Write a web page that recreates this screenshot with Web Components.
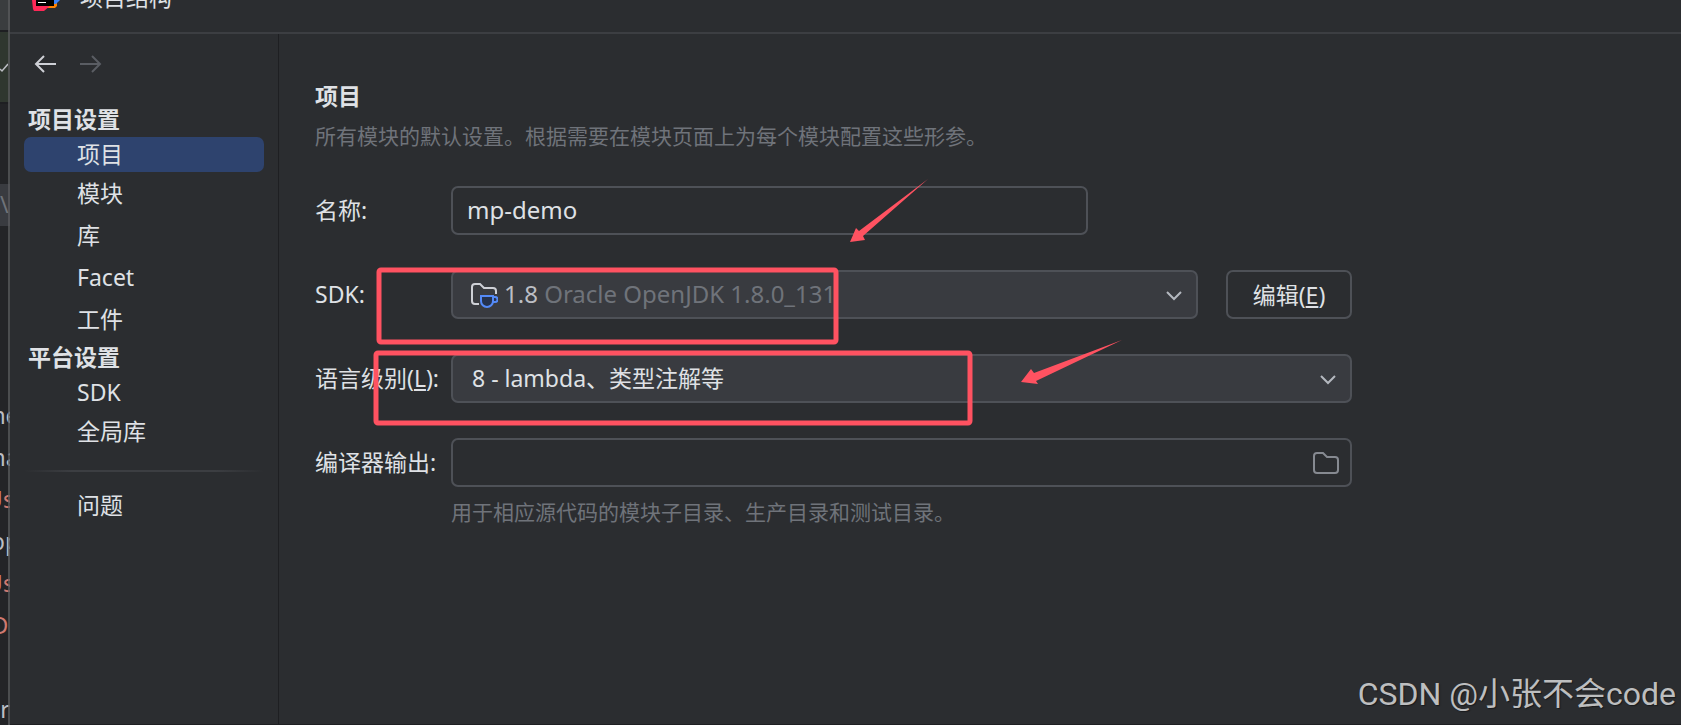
<!DOCTYPE html>
<html lang="zh-CN">
<head>
<meta charset="UTF-8">
<title>项目结构</title>
<style>
    :root {
        --bg: #2b2d30;
        --field: #393b40;
        --line: #4e5157;
        --divider: #1e1f22;
        --text: #dfe1e5;
        --muted: #6f737a;
        --select: #2e436e;
        --mark: #ff5261;
    }
    body {
        margin: 0;
        background: var(--bg);
        color: var(--text);
        font: 23px/34px "Noto Sans", "Noto Sans CJK SC", sans-serif;
    }
</style>
</head>
<body>
<project-structure></project-structure>

<script>
class EditorStrip extends HTMLElement {
    constructor() {
        super();
        this.attachShadow({ mode: 'open' });
    }

    connectedCallback() {
        this.shadowRoot.innerHTML = `
            <style>
                :host {
                    display: block;
                    position: relative;
                    width: 10px;
                    flex: none;
                    overflow: hidden;
                    background: #232427;
                    color: #bcbec4;
                }
                /* translucent window edge, the editor text shows through it */
                :host::after {
                    content: '';
                    position: absolute;
                    inset: 0 0 0 8px;
                    background: rgba(90, 91, 93, 0.75);
                }
                .top { height: 30px; background: #3a3d3f; }
                .run {
                    height: 70px;
                    background: #2f372f;
                    border: solid #1e1f22;
                    border-width: 2px 0;
                    display: flex;
                    align-items: center;
                }
                .row {
                    box-sizing: border-box;
                    height: 42px;
                    padding-bottom: 2px;
                    display: flex;
                    justify-content: center;
                    align-items: center;
                    white-space: nowrap;
                }
                .tab { margin: 80px 0 169px; justify-content: flex-start; background: #393b40; color: #6f737a; }
                .red { padding-right: 10px; color: #cf7a71; }
            </style>
            <div class="top"></div>
            <div class="run"><svg width="8" height="12" fill="none" stroke="#bcbec4" stroke-width="1.5"><path d="M0 8l2 2 6-7"/></svg></div>
            <div class="row tab">\\M</div>
            <div class="row">ne</div>
            <div class="row">na</div>
            <div class="row red">Us</div>
            <div class="row">pp</div>
            <div class="row red">Us</div>
            <div class="row red">D</div>
            <div class="row"></div>
            <div class="row">r</div>
        `;
    }
}
customElements.define('editor-strip', EditorStrip);

class TitleBar extends HTMLElement {
    constructor() {
        super();
        this.attachShadow({ mode: 'open' });
    }

    connectedCallback() {
        this.shadowRoot.innerHTML = `
            <style>
                :host {
                    display: flex;
                    align-items: flex-start;
                    gap: 20px;
                    height: 32px;
                    padding-left: 21px;
                    border-bottom: 2px solid #3c3e42;
                    overflow: hidden;
                }
                .title { margin-top: -20px; }
                svg { flex: none; }
            </style>
            <svg width="29" height="12" viewBox="0 0 29 12">
                <path fill="#ff8100" d="M14 0h12v6l-2 2H14z"/>
                <path fill="#3b82f6" d="M23 0h6l-4 4h-2z"/>
                <path fill="#fe2857" d="M1 0h16l3 5-7 6H3L2 9z"/>
                <path fill="#000" d="M5 0h18v6H5z"/>
                <path fill="#fff" d="M7 2h8v1H7z"/>
            </svg>
            <span class="title"><slot></slot></span>
        `;
    }
}
customElements.define('title-bar', TitleBar);

class NavGroup extends HTMLElement {
    constructor() {
        super();
        this.attachShadow({ mode: 'open' });
    }

    connectedCallback() {
        this.shadowRoot.innerHTML = `
            <style>
                :host { display: flex; flex-direction: column; gap: 7px; }
                h2 {
                    box-sizing: border-box;
                    height: 34px;
                    margin: 0 0 -7px;
                    padding-left: 4px;
                    font: inherit;
                    font-weight: 700;
                    line-height: 32px;
                }
                ::slotted(:first-child) { margin-bottom: -3px; }
            </style>
            <h2>${this.getAttribute('heading')}</h2>
            <slot></slot>
        `;
    }
}
customElements.define('nav-group', NavGroup);

class NavItem extends HTMLElement {
    constructor() {
        super();
        this.attachShadow({ mode: 'open' });
    }

    connectedCallback() {
        this.shadowRoot.innerHTML = `
            <style>
                :host { display: block; }
                button {
                    display: block;
                    width: 100%;
                    height: 35px;
                    padding: 0 0 0 53px;
                    border: 0;
                    border-radius: 7px;
                    background: none;
                    color: inherit;
                    font: inherit;
                    line-height: 33px;
                    text-align: left;
                }
                :host([selected]) button { background: var(--select); }
            </style>
            <button type="button"><slot></slot></button>
        `;
    }
}
customElements.define('nav-item', NavItem);

class SideNav extends HTMLElement {
    constructor() {
        super();
        this.attachShadow({ mode: 'open' });
    }

    connectedCallback() {
        this.shadowRoot.innerHTML = `
            <style>
                :host {
                    display: flex;
                    flex-direction: column;
                    box-sizing: border-box;
                    width: 269px;
                    flex: none;
                    padding: 18px 14px 0;
                    border-right: 1px solid var(--divider);
                }
                .history { display: flex; gap: 22px; padding-left: 9px; margin-bottom: 27px; }
                .history button { display: flex; padding: 0; border: 0; background: none; color: #ced0d6; }
                .history button:disabled { color: #5a5d63; }
                svg { fill: none; stroke: currentColor; stroke-width: 2; }
                nav-group + nav-group { margin-top: 4px; }
                hr {
                    width: 100%;
                    height: 2px;
                    margin: 21px 0 16px;
                    border: 0;
                    background: linear-gradient(to right, transparent, #3c3e42 20%, #3c3e42 80%, transparent);
                }
            </style>
            <div class="history">
                <button type="button" aria-label="后退"><svg width="24" height="24"><path d="M23 12H3M11 4l-8 8 8 8"/></svg></button>
                <button type="button" aria-label="前进" disabled><svg width="24" height="24"><path d="M1 12h20M13 4l8 8-8 8"/></svg></button>
            </div>
            <nav-group heading="项目设置">
                <nav-item selected>项目</nav-item>
                <nav-item>模块</nav-item>
                <nav-item>库</nav-item>
                <nav-item>Facet</nav-item>
                <nav-item>工件</nav-item>
            </nav-group>
            <nav-group heading="平台设置">
                <nav-item>SDK</nav-item>
                <nav-item>全局库</nav-item>
            </nav-group>
            <hr>
            <nav-item>问题</nav-item>
        `;
    }
}
customElements.define('side-nav', SideNav);

class ProjectForm extends HTMLElement {
    constructor() {
        super();
        this.attachShadow({ mode: 'open' });
    }

    connectedCallback() {
        this.shadowRoot.innerHTML = `
            <style>
                :host {
                    display: block;
                    flex: 1;
                    min-width: 0;
                    max-width: 1037px;
                    padding: 45px 36px 0;
                }
                h1 { margin: 0; font: inherit; font-weight: 700; }
                p { margin: 0; font-size: 21px; line-height: 34px; color: var(--muted); }
                .intro { margin: 6px 0 33px; }
                form {
                    display: grid;
                    grid-template-columns: 136px 1fr 126px;
                    row-gap: 35px;
                    align-items: center;
                }
                label { padding-bottom: 2px; white-space: nowrap; }
                .field { position: relative; display: flex; }
                .wide { grid-column: 2 / 4; }
                .name { margin-right: 264px; }
                .sdk { margin-right: 28px; }
                input, select, .edit {
                    box-sizing: border-box;
                    width: 100%;
                    height: 49px;
                    margin: 0;
                    padding: 0 14px 2px;
                    border: 2px solid var(--line);
                    border-radius: 7px;
                    background: transparent;
                    color: inherit;
                    font: inherit;
                    appearance: none;
                    outline: none;
                }
                input, .value { font-size: 24px; }
                select { background: var(--field); padding: 0 19px 2px; }
                .edit { padding: 0; }
                .icon { position: absolute; fill: none; pointer-events: none; }
                .chevron { right: 16px; top: 18px; stroke: #b4b8bf; stroke-width: 2; }
                .folder { right: 13px; top: 13px; stroke: #868a91; stroke-width: 2; }
                /* the chosen SDK has two colours, so it is laid over the select */
                .value {
                    position: absolute;
                    inset: 0 44px 0 20px;
                    display: flex;
                    align-items: center;
                    gap: 6px;
                    pointer-events: none;
                    white-space: nowrap;
                    color: #bcbec4;
                }
                .value span { padding-bottom: 2px; }
                .value small { font-size: inherit; color: var(--muted); }
                .hint { grid-column: 2 / 4; margin-top: -27px; }
            </style>
            <h1>项目</h1>
            <p class="intro">所有模块的默认设置。根据需要在模块页面上为每个模块配置这些形参。</p>
            <form>
                <label for="name">名称:</label>
                <div class="field wide name"><input id="name" value="mp-demo"></div>

                <label for="sdk">SDK:</label>
                <div class="field sdk">
                    <select id="sdk"><option></option></select>
                    <div class="value">
                        <svg width="27" height="26" viewBox="0 0 27 26" fill="none" stroke-width="2">
                            <path stroke="#ced0d6" d="M8 22H4a3 3 0 0 1-3-3V5a3 3 0 0 1 3-3h5l4 4h9a3 3 0 0 1 3 3v3"/>
                            <path stroke="#548af7" fill="#25324d" d="M10 14h12v5a6 6 0 0 1-12 0zM22 15h2a2 2 0 0 1 0 5h-2"/>
                        </svg>
                        <span>1.8 <small>Oracle OpenJDK 1.8.0_131</small></span>
                    </div>
                    <svg class="icon chevron" width="16" height="14"><path d="M1 4l7 7 7-7"/></svg>
                </div>
                <button type="button" class="edit">编辑(<u>E</u>)</button>

                <label for="level">语言级别(<u>L</u>):</label>
                <div class="field wide">
                    <select id="level"><option>8 - lambda、类型注解等</option></select>
                    <svg class="icon chevron" width="16" height="14"><path d="M1 4l7 7 7-7"/></svg>
                </div>

                <label for="output">编译器输出:</label>
                <div class="field wide">
                    <input id="output">
                    <svg class="icon folder" width="26" height="24"><path d="M4 2h6l4 4h8a3 3 0 0 1 3 3v10a3 3 0 0 1-3 3H4a3 3 0 0 1-3-3V5a3 3 0 0 1 3-3z"/></svg>
                </div>
                <p class="hint">用于相应源代码的模块子目录、生产目录和测试目录。</p>
            </form>
        `;
    }
}
customElements.define('project-form', ProjectForm);

// Hand-drawn boxes and arrows lying over the dialog
class MarkLayer extends HTMLElement {
    constructor() {
        super();
        this.attachShadow({ mode: 'open' });
    }

    connectedCallback() {
        this.shadowRoot.innerHTML = `
            <style>
                :host { position: absolute; top: 0; left: 0; pointer-events: none; }
                svg { display: block; }
                rect { fill: none; stroke: var(--mark); stroke-width: 5; }
                path { fill: var(--mark); }
            </style>
            <svg width="1130" height="430">
                <rect x="379" y="270" width="457" height="72" rx="2"/>
                <rect x="376" y="353" width="594" height="70" rx="2"/>
                <path d="M850 242l6-14 3 3L928 179 863 236l2 4z"/>
                <path d="M1021 382l10-13 3 4 88-33-86 41 2 3z"/>
            </svg>
        `;
    }
}
customElements.define('mark-layer', MarkLayer);

class WaterMark extends HTMLElement {
    constructor() {
        super();
        this.attachShadow({ mode: 'open' });
    }

    connectedCallback() {
        this.shadowRoot.innerHTML = `
            <style>
                :host {
                    position: absolute;
                    right: 5px;
                    bottom: 7px;
                    color: #bdbebf;
                    font: 32px/48px Roboto, "Noto Sans CJK SC", sans-serif;
                    text-shadow: 1px 1px 1px #1a1b1d;
                    white-space: nowrap;
                }
            </style>
            <slot></slot>
        `;
    }
}
customElements.define('water-mark', WaterMark);

class ProjectStructure extends HTMLElement {
    constructor() {
        super();
        this.attachShadow({ mode: 'open' });
    }

    connectedCallback() {
        this.shadowRoot.innerHTML = `
            <style>
                :host {
                    position: relative;
                    display: flex;
                    height: 100vh;
                    overflow: hidden;
                }
                .dialog { flex: 1; min-width: 0; display: flex; flex-direction: column; border-bottom: 1px solid var(--divider); }
                .content { flex: 1; display: flex; }
            </style>
            <editor-strip></editor-strip>
            <div class="dialog">
                <title-bar>项目结构</title-bar>
                <div class="content">
                    <side-nav></side-nav>
                    <project-form></project-form>
                </div>
            </div>
            <mark-layer></mark-layer>
            <water-mark>CSDN @小张不会code</water-mark>
        `;
    }
}
customElements.define('project-structure', ProjectStructure);
</script>
</body>
</html>
